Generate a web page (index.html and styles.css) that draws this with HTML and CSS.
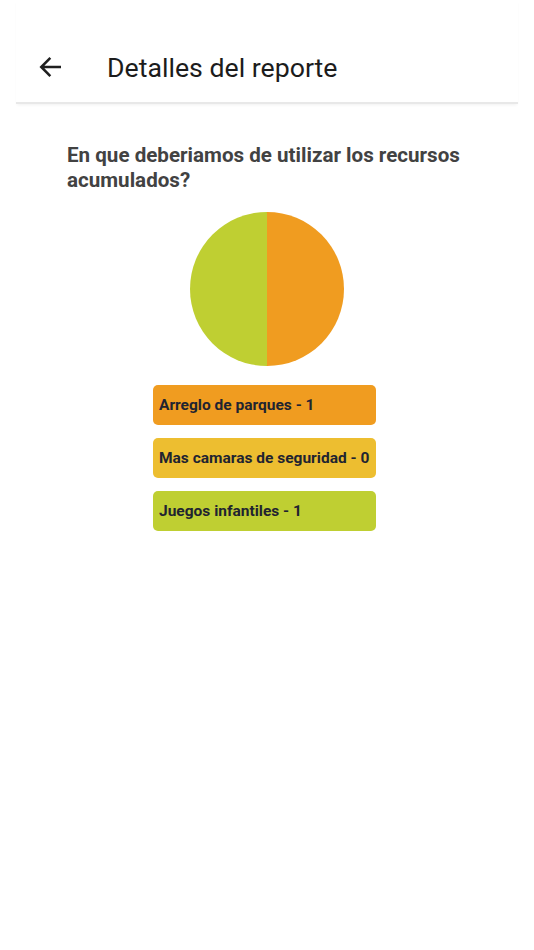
FILE: index.html
```html
<!DOCTYPE html>
<html lang="es">
<head>
<meta charset="utf-8">
<title>Detalles del reporte</title>
<link rel="stylesheet" href="styles.css">
</head>
<body>
<header class="appbar">
  <button class="back" aria-label="Volver">
    <svg viewBox="0 0 24 24" width="32" height="32"><path d="M19.5 12H5M11.5 5.2L4.7 12l6.8 6.8" fill="none" stroke="#1f1f1f" stroke-width="1.9" stroke-linecap="butt"/></svg>
  </button>
  <h1 class="title">Detalles del reporte</h1>
</header>
<main class="content">
  <h2 class="question">En que deberiamos de utilizar los recursos acumulados?</h2>
  <div class="chart">
    <svg viewBox="0 0 154 154" width="154" height="154">
      <path d="M77 0 A77 77 0 0 1 77 154 Z" fill="#f09c20"/>
      <path d="M77 154 A77 77 0 0 1 77 0 Z" fill="#bfcf32"/>
    </svg>
  </div>
  <ul class="options">
    <li class="option opt-orange">Arreglo de parques - 1</li>
    <li class="option opt-yellow">Mas camaras de seguridad - 0</li>
    <li class="option opt-green">Juegos infantiles - 1</li>
  </ul>
</main>
</body>
</html>
```
FILE: styles.css
```css
html, body {
  margin: 0;
  padding: 0;
  background: #fff;
  font-family: Roboto, "Liberation Sans", sans-serif;
}
.appbar {
  margin: 0 16px;
  padding: 32px 0 0 19px;
  height: 70px;
  display: flex;
  align-items: center;
  border-bottom: 2px solid #e8e8e8;
  box-shadow: 0 2px 3px -1px rgba(0,0,0,0.06);
}
.back {
  width: 32px;
  height: 32px;
  padding: 0;
  border: 0;
  background: none;
  display: flex;
}
.title {
  margin: 2px 0 0 40px;
  font-size: 26.7px;
  font-weight: 400;
  color: #1c1c1c;
}
.content {
  padding: 39px 0 0 67px;
}
.question {
  margin: 0;
  font-size: 20.6px;
  line-height: 25px;
  font-weight: 700;
  color: #424242;
  width: 420px;
}
.chart {
  width: 154px;
  margin: 19px 0 0 123px;
  height: 154px;
}
.chart svg { display: block; }
.options {
  list-style: none;
  margin: 19px 0 0 86px;
  padding: 0;
  display: flex;
  flex-direction: column;
  gap: 13px;
}
.option {
  width: 217px;
  height: 40px;
  padding-left: 6px;
  box-sizing: content-box;
  border-radius: 5px;
  display: flex;
  align-items: center;
  font-size: 15.5px;
  font-weight: 700;
  color: #1f2430;
}
.opt-orange { background: #f09c20; }
.opt-yellow { background: #edbe30; }
.opt-green { background: #bfcf32; }
```
